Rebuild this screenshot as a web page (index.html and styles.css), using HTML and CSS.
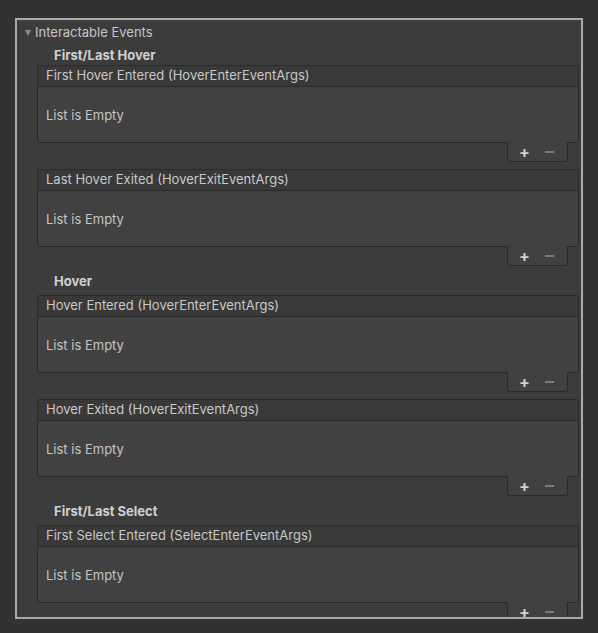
FILE: index.html
```html
<!DOCTYPE html>
<html>
<head>
<meta charset="utf-8">
<link rel="stylesheet" href="styles.css">
</head>
<body>
<div class="panel">
  <div class="foldout"><span class="tri"></span>Interactable Events</div>

  <div class="label">First/Last Hover</div>
  <div class="list">
    <div class="list-head">First Hover Entered (HoverEnterEventArgs)</div>
    <div class="list-body">List is Empty</div>
    <div class="list-foot"><span class="plus">+</span><span class="minus"></span></div>
  </div>
  <div class="list">
    <div class="list-head">Last Hover Exited (HoverExitEventArgs)</div>
    <div class="list-body">List is Empty</div>
    <div class="list-foot"><span class="plus">+</span><span class="minus"></span></div>
  </div>

  <div class="label">Hover</div>
  <div class="list">
    <div class="list-head">Hover Entered (HoverEnterEventArgs)</div>
    <div class="list-body">List is Empty</div>
    <div class="list-foot"><span class="plus">+</span><span class="minus"></span></div>
  </div>
  <div class="list">
    <div class="list-head">Hover Exited (HoverExitEventArgs)</div>
    <div class="list-body">List is Empty</div>
    <div class="list-foot"><span class="plus">+</span><span class="minus"></span></div>
  </div>

  <div class="label">First/Last Select</div>
  <div class="list">
    <div class="list-head">First Select Entered (SelectEnterEventArgs)</div>
    <div class="list-body">List is Empty</div>
    <div class="list-foot"><span class="plus">+</span><span class="minus"></span></div>
  </div>
</div>
</body>
</html>
```

FILE: styles.css
```css
html, body {
  margin: 0;
  background: #323232;
}
body {
  padding: 18px 15px 0 15px;
  font-family: Inter, "Noto Sans", "Liberation Sans", sans-serif;
  font-size: 13px;
  color: #c4c4c4;
}
.panel {
  box-sizing: border-box;
  height: 601px;
  border: 2px solid #a9a9a9;
  background: #3c3c3c;
  overflow: hidden;
  padding: 2px 2px 0 0;
}
.foldout {
  height: 20px;
  line-height: 20px;
  display: flex;
  align-items: center;
  padding-left: 8px;
  color: #c4c4c4;
}
.tri {
  width: 0;
  height: 0;
  border-left: 3.5px solid transparent;
  border-right: 3.5px solid transparent;
  border-top: 6px solid #8a8a8a;
  margin-right: 4px;
  margin-top: 1px;
}
.label {
  margin: 5px 0 0 37px;
  height: 18px;
  line-height: 16px;
  font-weight: 700;
  color: #d0d0d0;
}
.list + .label {
  margin-top: 0;
  margin-bottom: 2px;
  height: 20px;
  line-height: 16px;
}
.list {
  margin: 0 0 7px 20px;
  display: flex;
  flex-direction: column;
}
.list-head {
  box-sizing: border-box;
  height: 21px;
  line-height: 19px;
  padding-left: 8px;
  background: #393939;
  border: 1px solid #2a2a2a;
  border-bottom: none;
  border-radius: 3px 3px 0 0;
  color: #c8c8c8;
}
.list-body {
  box-sizing: border-box;
  height: 57px;
  padding-left: 8px;
  display: flex;
  align-items: center;
  background: #414141;
  border: 1px solid #2a2a2a;
  border-radius: 0 0 3px 3px;
  color: #c4c4c4;
}
.list-foot {
  align-self: flex-end;
  box-sizing: border-box;
  width: 61px;
  height: 20px;
  margin-right: 11px;
  margin-top: -1px;
  background: #414141;
  border: 1px solid #2a2a2a;
  border-top: none;
  border-radius: 0 0 3px 3px;
  display: flex;
  align-items: center;
  padding-left: 11px;
}
.plus {
  font-size: 16px;
  font-weight: 700;
  line-height: 16px;
  color: #d0d0d0;
  width: 10px;
  text-align: center;
}
.minus {
  width: 9px;
  height: 2px;
  background: #7a7a7a;
  margin-left: 16px;
}
```
